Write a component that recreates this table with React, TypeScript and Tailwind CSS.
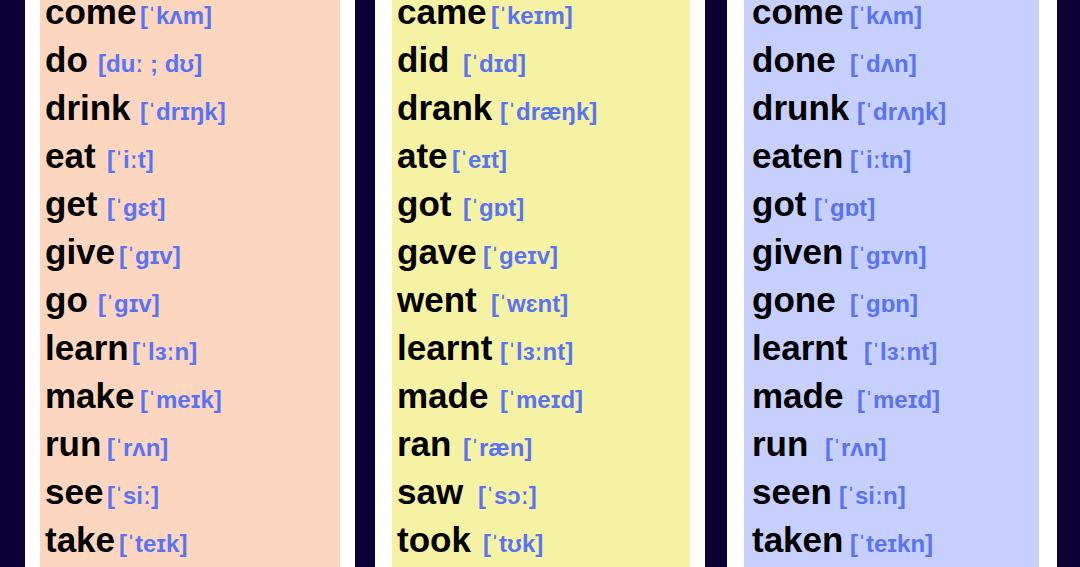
import React from "react";

type Row = { w: string; ipa: string; cls: string };

const col1: Row[] = [
  { w: "come", ipa: "[ˈkʌm]", cls: "w-[95px]" },
  { w: "do", ipa: "[duː ; dʊ]", cls: "w-[53px]" },
  { w: "drink", ipa: "[ˈdrɪŋk]", cls: "w-[95px]" },
  { w: "eat", ipa: "[ˈiːt]", cls: "w-[62px]" },
  { w: "get", ipa: "[ˈgɛt]", cls: "w-[62px]" },
  { w: "give", ipa: "[ˈgɪv]", cls: "w-[74px]" },
  { w: "go", ipa: "[ˈgɪv]", cls: "w-[53px]" },
  { w: "learn", ipa: "[ˈlɜːn]", cls: "w-[87px]" },
  { w: "make", ipa: "[ˈmeɪk]", cls: "w-[95px]" },
  { w: "run", ipa: "[ˈrʌn]", cls: "w-[62px]" },
  { w: "see", ipa: "[ˈsiː]", cls: "w-[62px]" },
  { w: "take", ipa: "[ˈteɪk]", cls: "w-[74px]" },
];

const col2: Row[] = [
  { w: "came", ipa: "[ˈkeɪm]", cls: "w-[94px]" },
  { w: "did", ipa: "[ˈdɪd]", cls: "w-[66px]" },
  { w: "drank", ipa: "[ˈdræŋk]", cls: "w-[103px]" },
  { w: "ate", ipa: "[ˈeɪt]", cls: "w-[55px]" },
  { w: "got", ipa: "[ˈgɒt]", cls: "w-[66px]" },
  { w: "gave", ipa: "[ˈgeɪv]", cls: "w-[86px]" },
  { w: "went", ipa: "[ˈwɛnt]", cls: "w-[94px]" },
  { w: "learnt", ipa: "[ˈlɜːnt]", cls: "w-[103px]" },
  { w: "made", ipa: "[ˈmeɪd]", cls: "w-[103px]" },
  { w: "ran", ipa: "[ˈræn]", cls: "w-[66px]" },
  { w: "saw", ipa: "[ˈsɔː]", cls: "w-[81px]" },
  { w: "took", ipa: "[ˈtʊk]", cls: "w-[86px]" },
];

const col3: Row[] = [
  { w: "come", ipa: "[ˈkʌm]", cls: "w-[98px]" },
  { w: "done", ipa: "[ˈdʌn]", cls: "w-[98px]" },
  { w: "drunk", ipa: "[ˈdrʌŋk]", cls: "w-[105px]" },
  { w: "eaten", ipa: "[ˈiːtn]", cls: "w-[98px]" },
  { w: "got", ipa: "[ˈgɒt]", cls: "w-[62px]" },
  { w: "given", ipa: "[ˈgɪvn]", cls: "w-[98px]" },
  { w: "gone", ipa: "[ˈgɒn]", cls: "w-[98px]" },
  { w: "learnt", ipa: "[ˈlɜːnt]", cls: "w-[112px]" },
  { w: "made", ipa: "[ˈmeɪd]", cls: "w-[105px]" },
  { w: "run", ipa: "[ˈrʌn]", cls: "w-[73px]" },
  { w: "seen", ipa: "[ˈsiːn]", cls: "w-[87px]" },
  { w: "taken", ipa: "[ˈteɪkn]", cls: "w-[98px]" },
];

function Column({ rows, bg, pad, outer }: { rows: Row[]; bg: string; pad: string; outer: string }) {
  return (
    <div className={`${outer} h-full bg-white flex shrink-0`}>
      <div className={`${bg} ${pad} flex-1 h-full overflow-hidden`}>
        <div className="-mt-[12px]">
          {rows.map((r, i) => (
            <div
              key={i}
              className="h-[48px] leading-[48px] whitespace-nowrap text-[35px] font-bold text-black"
            >
              <span className={`${r.cls} inline-block`}>{r.w}</span>
              <span className="text-[24px] leading-none text-[#5873f3]">{r.ipa}</span>
            </div>
          ))}
        </div>
      </div>
    </div>
  );
}

export default function App() {
  return (
    <div
      className="w-[1080px] h-[567px] overflow-hidden bg-[#0c0038] flex"
      style={{ fontFamily: '"Liberation Sans", Arial, sans-serif' }}
    >
      <div className="w-[25px] shrink-0" />
      <Column rows={col1} bg="bg-[#fdd6bf]" pad="pl-[5px]" outer="w-[330px] px-[15px]" />
      <div className="w-[20px] shrink-0" />
      <Column rows={col2} bg="bg-[#f6f2a3]" pad="pl-[5px]" outer="w-[330px] pl-[17px] pr-[15px]" />
      <div className="w-[22px] shrink-0" />
      <Column rows={col3} bg="bg-[#c7cffd]" pad="pl-[8px]" outer="w-[330px] pl-[17px] pr-[18px]" />
    </div>
  );
}
